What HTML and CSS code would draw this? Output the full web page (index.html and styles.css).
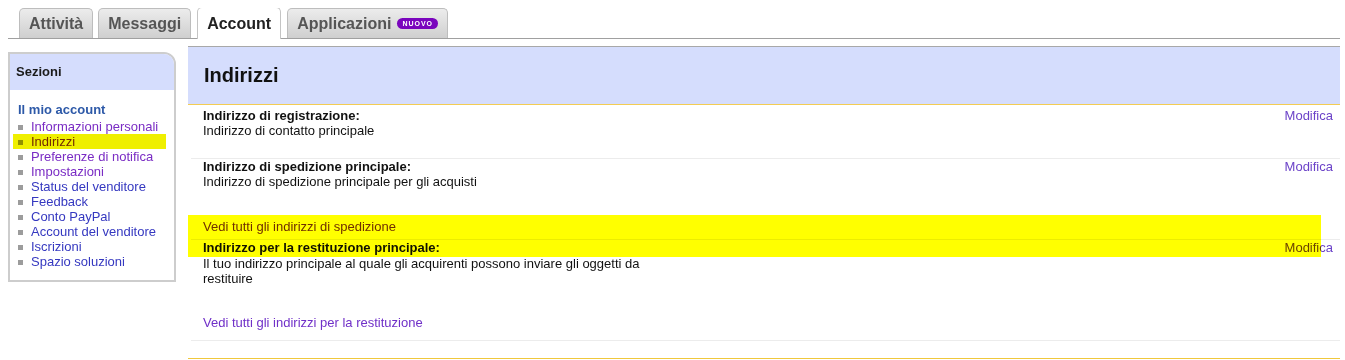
FILE: index.html
```html
<!DOCTYPE html>
<html lang="it">
<head>
    <meta charset="UTF-8">
    <title>Indirizzi</title>
    <link rel="stylesheet" href="styles.css">
</head>
<body>
    <div class="tabs">
        <a class="tab">Attività</a>
        <a class="tab">Messaggi</a>
        <a class="tab active">Account</a>
        <a class="tab">Applicazioni <span class="badge">NUOVO</span></a>
    </div>

    <div class="layout">
        <div class="sidebar">
            <div class="side-head">Sezioni</div>
            <div class="side-body">
                <div class="side-title">Il mio account</div>
                <ul class="side-list">
                    <li><a class="visited">Informazioni personali</a></li>
                    <li><a class="visited">Indirizzi</a></li>
                    <li><a class="visited">Preferenze di notifica</a></li>
                    <li><a class="visited">Impostazioni</a></li>
                    <li><a>Status del venditore</a></li>
                    <li><a>Feedback</a></li>
                    <li><a>Conto PayPal</a></li>
                    <li><a>Account del venditore</a></li>
                    <li><a>Iscrizioni</a></li>
                    <li><a>Spazio soluzioni</a></li>
                </ul>
            </div>
            <div class="mark mark-side"></div>
        </div>

        <div class="main">
            <div class="main-head">Indirizzi</div>

            <div class="row row-first">
                <div class="info">
                    <div class="label">Indirizzo di registrazione:</div>
                    <div class="desc">Indirizzo di contatto principale</div>
                </div>
                <a class="edit">Modifica</a>
            </div>

            <div class="row row-ship">
                <div class="info">
                    <div class="label">Indirizzo di spedizione principale:</div>
                    <div class="desc">Indirizzo di spedizione principale per gli acquisti</div>
                    <a class="more">Vedi tutti gli indirizzi di spedizione</a>
                </div>
                <a class="edit">Modifica</a>
            </div>

            <div class="row row-return">
                <div class="info">
                    <div class="label">Indirizzo per la restituzione principale:</div>
                    <div class="desc">Il tuo indirizzo principale al quale gli acquirenti possono inviare gli oggetti da restituire</div>
                    <a class="more">Vedi tutti gli indirizzi per la restituzione</a>
                </div>
                <a class="edit">Modifica</a>
            </div>

            <div class="main-foot"></div>
            <div class="mark mark-main"></div>
        </div>
    </div>
</body>
</html>
```

FILE: styles.css
```css
body {
    font-family: "Liberation Sans", Arial, sans-serif;
    font-size: 13px;
    line-height: 15px;
    color: #111;
    margin: 8px 5px 8px 8px;
}
a {
    cursor: pointer;
}
.tabs {
    display: flex;
    align-items: flex-end;
    gap: 5px;
    padding-left: 11px;
    border-bottom: 1px solid #a0a0a0;
    height: 30px;
}
.tab {
    display: flex;
    align-items: center;
    height: 29px;
    padding: 0 9px;
    font-size: 16px;
    font-weight: bold;
    color: #555;
    background: linear-gradient(#ececec, #cfcfcf);
    border: 1px solid #bdbdbd;
    border-bottom: none;
    border-radius: 5px 5px 0 0;
}
.tab.active {
    height: 31px;
    margin: 0 1px -1px 1px;
    background: #fff;
    color: #222;
    border-color: #c4c4c4;
}
.badge {
    display: inline-block;
    margin-left: 6px;
    padding: 0 5px;
    height: 11px;
    line-height: 11px;
    font-size: 7px;
    letter-spacing: 1px;
    color: #fff;
    background: #7a05bd;
    border-radius: 6px;
}
.layout {
    display: flex;
    align-items: flex-start;
}
.sidebar {
    position: relative;
    width: 164px;
    margin-top: 13px;
    border: 2px solid #cdcdcd;
    border-radius: 0 12px 0 0;
}
.side-head {
    background: #d5ddfd;
    height: 36px;
    line-height: 35px;
    padding-left: 6px;
    font-weight: bold;
    color: #1a1a1a;
    border-radius: 0 10px 0 0;
}
.side-body {
    padding: 12px 0 11px 8px;
}
.side-title {
    font-weight: bold;
    color: #2d59a8;
}
.side-list {
    list-style: none;
    margin: 2px 0 0;
    padding: 0;
}
.side-list li {
    display: flex;
    align-items: center;
}
.side-list li::before {
    content: "";
    width: 5px;
    height: 5px;
    background: #9c9c9c;
    margin: 2px 8px 0 0;
}
.side-list a {
    color: #3538c0;
}
.side-list a.visited {
    color: #7a2cc4;
}
.main {
    position: relative;
    flex: 1;
    margin: 7px 0 0 12px;
}
.main-head {
    background: #d5ddfd;
    border-top: 1px solid #a8a8a8;
    border-bottom: 1px solid #f3cc53;
    height: 57px;
    line-height: 56px;
    padding-left: 16px;
    font-size: 20px;
    font-weight: bold;
    color: #111;
}
.row {
    display: flex;
    justify-content: space-between;
    align-items: flex-start;
    margin-left: 3px;
    padding: 0 7px 0 12px;
    border-bottom: 1px solid #ececec;
}
.row-first {
    padding-top: 3px;
    height: 50px;
}
.row-ship {
    height: 80px;
}
.row-return {
    height: 100px;
}
.label {
    font-weight: bold;
}
.desc {
    max-width: 470px;
}
.row-return .desc {
    margin-top: 1px;
}
.more {
    display: block;
    color: #7030c8;
}
.row-ship .more {
    margin-top: 30px;
}
.row-return .more {
    margin-top: 29px;
}
.edit {
    color: #6b42c8;
}
.main-foot {
    height: 17px;
    border-bottom: 1px solid #f0c83c;
}
.mark {
    position: absolute;
    mix-blend-mode: multiply;
}
.mark-side {
    left: 3px;
    top: 80px;
    width: 153px;
    height: 15px;
    background: #efef00;
}
.mark-main {
    left: 0;
    top: 169px;
    width: 1133px;
    height: 42px;
    background: #ffff00;
}
```
